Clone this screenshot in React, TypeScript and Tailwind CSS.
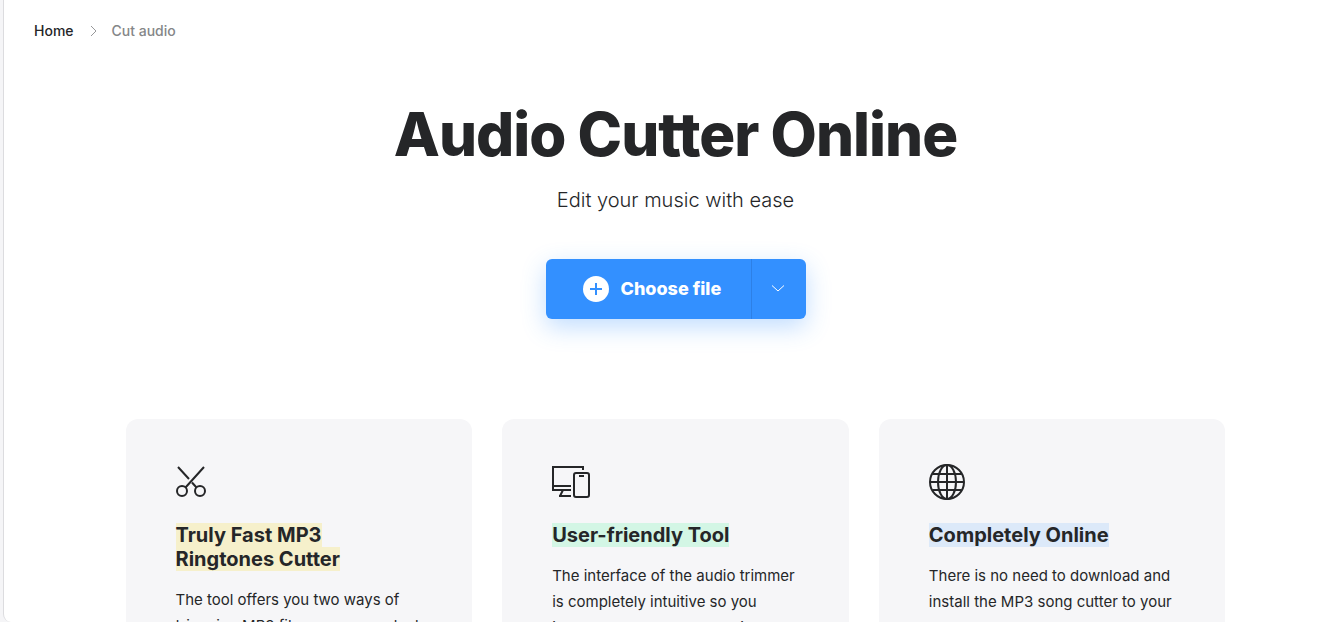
import { ReactNode } from "react";

export default function App() {
  return (
    <div className="h-screen overflow-hidden bg-[#f5f5f7] pl-[3px] font-['Inter',sans-serif] text-[#252628]">
      <main className="h-full overflow-hidden rounded-bl-lg border-l border-[#dcdcdf] bg-white">

        {/* Breadcrumbs */}
        <nav aria-label="Breadcrumb" className="flex h-[62px] items-center px-[30px] text-sm font-medium">
          <a href="#home">Home</a>
          <svg className="mx-[14px] h-3 w-[10px]" viewBox="0 0 10 12" fill="none" stroke="#97989a" aria-hidden="true">
            <path d="M3 1 8 6l-5 5" />
          </svg>
          <span className="text-[#858688]">Cut audio</span>
        </nav>

        {/* Hero */}
        <section className="flex flex-col items-center pt-9 pl-[3px] text-center">
          <h1 className="text-[60px] leading-[72px] font-extrabold tracking-[-1px]">Audio Cutter Online</h1>
          <p className="mt-4 text-xl leading-7 font-light">Edit your music with ease</p>

          <div className="mt-[45px] flex h-[60px] w-[260px] rounded-md bg-[#3390ff] text-white shadow-[0_8px_24px_rgba(51,144,255,0.3)]">
            <button type="button" className="flex flex-1 items-center gap-3 pl-[37px] text-lg font-extrabold">
              <svg className="h-[26px] w-[26px]" viewBox="0 0 26 26" fill="none" aria-hidden="true">
                <circle cx="13" cy="13" r="13" fill="#fff" />
                <path d="M13 7v12M7 13h12" stroke="#3390ff" strokeWidth="2" />
              </svg>
              Choose file
            </button>
            <button
              type="button"
              aria-label="More sources"
              className="flex w-[55px] items-center justify-center border-l border-[#2d80e6]"
            >
              <svg className="h-[10px] w-[14px]" viewBox="0 0 14 10" fill="none" stroke="#fff" aria-hidden="true">
                <path d="m0 1.5 6 5.5 6-5.5" />
              </svg>
            </button>
          </div>
        </section>

        {/* Features */}
        <section className="mt-[100px] pl-[3px]">
          <div className="mx-auto grid max-w-[1100px] grid-cols-3 gap-[30px]">
            <FeatureCard
              icon={<ScissorsIcon />}
              title="Truly Fast MP3 Ringtones Cutter"
              highlight="bg-[#f6f0cb]"
              text="The tool offers you two ways of trimming MP3 files: you can select the fragment or enter its time."
            />
            <FeatureCard
              icon={<DevicesIcon />}
              title="User-friendly Tool"
              highlight="bg-[#d3f6e5]"
              text="The interface of the audio trimmer is completely intuitive so you instantly know how to use it."
            />
            <FeatureCard
              icon={<GlobeIcon />}
              title="Completely Online"
              highlight="bg-[#dce9f9]"
              text="There is no need to download and install the MP3 song cutter to your computer. Just open the page."
            />
          </div>
        </section>
      </main>
    </div>
  );
}

type FeatureCardProps = {
  icon: ReactNode;
  title: string;
  highlight: string;
  text: string;
};

const FeatureCard = ({ icon, title, highlight, text }: FeatureCardProps) => (
  <article className="rounded-xl bg-[#f6f6f8] px-[50px] pt-[43px] pb-10">
    {icon}
    <h2 className="mt-[21px] text-xl leading-6 font-bold">
      <span className={highlight}>{title}</span>
    </h2>
    <p className="mt-4 text-[15px] leading-[26px]">{text}</p>
  </article>
);

const ScissorsIcon = () => (
  <svg className="h-10 w-10" viewBox="0 0 40 40" fill="none" stroke="currentColor" strokeWidth="2" aria-hidden="true">
    <circle cx="6" cy="29" r="5" />
    <circle cx="24" cy="29" r="5" />
    <path d="M28 5 9.5 25.5M2 5l11 12M16 20.5l4.5 5" />
  </svg>
);

const DevicesIcon = () => (
  <svg className="h-10 w-10" viewBox="0 0 40 40" fill="none" stroke="currentColor" strokeWidth="2" aria-hidden="true">
    <path d="M31 8V5H1v23h18M1 24h18M11 28l-3 6M7 34h12" />
    <rect x="22" y="11" width="15" height="24" rx="2" />
    <path d="M27 14h5" />
  </svg>
);

const GlobeIcon = () => (
  <svg className="h-10 w-10" viewBox="0 0 40 40" fill="none" stroke="currentColor" strokeWidth="2" aria-hidden="true">
    <circle cx="18" cy="20" r="17" />
    <ellipse cx="18" cy="20" rx="9" ry="17" />
    <path d="M18 3v34M1 20h34M3.5 12h29M3.5 28h29" />
  </svg>
);
